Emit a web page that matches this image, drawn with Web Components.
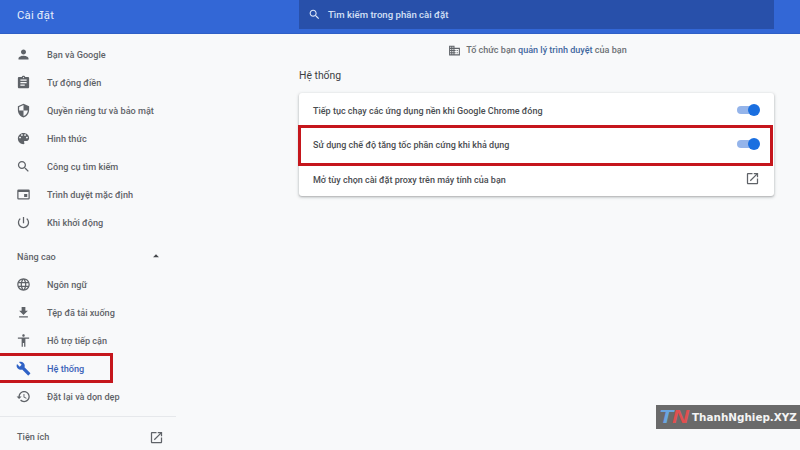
<!DOCTYPE html>
<html lang="vi"><head><meta charset="utf-8"><title>Cài đặt</title>
<style>
html,body{margin:0;height:100%;overflow:hidden;background:#f8f9fa}
body{font-family:Roboto,"Noto Sans",sans-serif;width:800px;height:450px;position:relative}
</style></head><body>
<settings-app></settings-app>
<script>
const P={
person:'M12 12c2.21 0 4-1.79 4-4s-1.79-4-4-4-4 1.79-4 4 1.79 4 4 4zm0 2c-2.67 0-8 1.34-8 4v2h16v-2c0-2.66-5.33-4-8-4z',
assignment:'M19 3h-4.18C14.4 1.84 13.3 1 12 1c-1.3 0-2.4.84-2.82 2H5c-1.1 0-2 .9-2 2v14c0 1.1.9 2 2 2h14c1.1 0 2-.9 2-2V5c0-1.1-.9-2-2-2zm-7 0c.55 0 1 .45 1 1s-.45 1-1 1-1-.45-1-1 .45-1 1-1zm2 14H7v-2h7v2zm3-4H7v-2h10v2zm0-4H7V7h10v2z',
security:'M12 1L3 5v6c0 5.55 3.84 10.74 9 12 5.16-1.26 9-6.45 9-12V5l-9-4zm0 10.99h7c-.53 4.12-3.28 7.79-7 8.94V12H5V6.3l7-3.11v8.8z',
palette:'M12 3c-4.97 0-9 4.03-9 9s4.03 9 9 9c.83 0 1.5-.67 1.5-1.5 0-.39-.15-.74-.39-1.01-.23-.26-.38-.61-.38-.99 0-.83.67-1.5 1.5-1.5H16c2.76 0 5-2.24 5-5 0-4.42-4.03-8-9-8zm-5.5 9c-.83 0-1.5-.67-1.5-1.5S5.67 9 6.5 9 8 9.67 8 10.5 7.33 12 6.5 12zm3-4C8.67 8 8 7.33 8 6.5S8.67 5 9.5 5s1.5.67 1.5 1.5S10.33 8 9.5 8zm5 0c-.83 0-1.5-.67-1.5-1.5S13.67 5 14.5 5s1.5.67 1.5 1.5S15.33 8 14.5 8zm3 4c-.83 0-1.5-.67-1.5-1.5S16.67 9 17.5 9s1.5.67 1.5 1.5-.67 1.5-1.5 1.5z',
search:'M15.5 14h-.79l-.28-.27C15.41 12.59 16 11.11 16 9.5 16 5.91 13.09 3 9.5 3S3 5.91 3 9.5 5.91 16 9.5 16c1.61 0 3.09-.59 4.23-1.57l.27.28v.79l5 4.99L20.49 19l-4.99-5zm-6 0C7.01 14 5 11.99 5 9.5S7.01 5 9.5 5 14 7.01 14 9.5 11.99 14 9.5 14z',
browser:'M20 4H4a2 2 0 0 0-2 2v12a2 2 0 0 0 2 2h16a2 2 0 0 0 2-2V6a2 2 0 0 0-2-2zm0 14H4V8h16zM13 11h5v5h-5z',
power:'M13 3h-2v10h2V3zm4.83 2.17l-1.42 1.42C17.99 7.86 19 9.81 19 12c0 3.87-3.13 7-7 7s-7-3.13-7-7c0-2.19 1.01-4.14 2.58-5.42L6.17 5.17C4.23 6.82 3 9.26 3 12c0 4.97 4.03 9 9 9s9-4.03 9-9c0-2.74-1.23-5.18-3.17-6.83z',
language:'M11.99 2C6.47 2 2 6.48 2 12s4.47 10 9.99 10C17.52 22 22 17.52 22 12S17.52 2 11.99 2zm6.93 6h-2.95c-.32-1.25-.78-2.45-1.38-3.56 1.84.63 3.37 1.91 4.33 3.56zM12 4.04c.83 1.2 1.48 2.53 1.91 3.96h-3.82c.43-1.43 1.08-2.76 1.91-3.96zM4.26 14C4.1 13.36 4 12.69 4 12s.1-1.36.26-2h3.38c-.08.66-.14 1.32-.14 2 0 .68.06 1.34.14 2H4.26zm.82 2h2.95c.32 1.25.78 2.45 1.38 3.56-1.84-.63-3.37-1.9-4.33-3.56zm2.95-8H5.08c.96-1.66 2.49-2.93 4.33-3.56C8.81 5.55 8.35 6.75 8.03 8zM12 19.96c-.83-1.2-1.48-2.53-1.91-3.96h3.82c-.43 1.43-1.08 2.76-1.91 3.96zM14.34 14H9.66c-.09-.66-.16-1.32-.16-2 0-.68.07-1.35.16-2h4.68c.09.65.16 1.32.16 2 0 .68-.07 1.34-.16 2zm.25 5.56c.6-1.11 1.06-2.31 1.38-3.56h2.95c-.96 1.65-2.49 2.93-4.33 3.56zM16.36 14c.08-.66.14-1.32.14-2 0-.68-.06-1.34-.14-2h3.38c.16.64.26 1.31.26 2s-.1 1.36-.26 2h-3.38z',
download:'M19 9h-4V3H9v6H5l7 7 7-7zM5 18v2h14v-2H5z',
access:'M12 2c1.1 0 2 .9 2 2s-.9 2-2 2-2-.9-2-2 .9-2 2-2zm9 7h-6v13h-2v-6h-2v6H9V9H3V7h18v2z',
build:'M22.7 19l-9.1-9.1c.9-2.3.4-5-1.5-6.9-2-2-5-2.4-7.4-1.3L9 6 6 9 1.6 4.7C.4 7.1.9 10.1 2.9 12.1c1.9 1.9 4.6 2.4 6.9 1.5l9.1 9.1c.4.4 1 .4 1.4 0l2.3-2.3c.5-.4.5-1.1.1-1.4z',
restore:'M13 3c-4.97 0-9 4.03-9 9H1l3.89 3.89.07.14L9 12H6c0-3.87 3.13-7 7-7s7 3.13 7 7-3.13 7-7 7c-1.93 0-3.68-.79-4.94-2.06l-1.42 1.42C8.27 19.99 10.51 21 13 21c4.97 0 9-4.03 9-9s-4.03-9-9-9zm-1 5v5l4.28 2.54.72-1.21-3.5-2.08V8H12z',
open:'M19 19H5V5h7V3H5c-1.11 0-2 .9-2 2v14c0 1.1.89 2 2 2h14c1.1 0 2-.9 2-2v-7h-2v7zM14 3v2h3.59l-9.83 9.83 1.41 1.41L19 6.41V10h2V3h-7z',
domain:'M12 7V3H2v18h20V7H12zM6 19H4v-2h2v2zm0-4H4v-2h2v2zm0-4H4V9h2v2zm0-4H4V5h2v2zm4 12H8v-2h2v2zm0-4H8v-2h2v2zm0-4H8V9h2v2zm0-4H8V5h2v2zm10 12h-8v-2h2v-2h-2v-2h2v-2h-2V9h8v10zm-2-8h-2v2h2v-2zm0 4h-2v2h2v-2z',
up:'M7 14l5-5 5 5z'};
function def(name,html,init){customElements.define(name,class extends HTMLElement{
  constructor(){super();this.attachShadow({mode:'open'}).innerHTML=html}
  connectedCallback(){init&&init(this)}
})}
def('m-icon',`<style>:host{display:inline-flex;width:var(--s,16px);height:var(--s,16px);flex:none;color:inherit}svg{width:100%;height:100%;fill:currentColor;display:block}</style><svg viewBox="0 0 24 24"><path></path></svg>`,
 el=>{const n=el.getAttribute('name');if(n)el.shadowRoot.querySelector('path').setAttribute('d',P[n])});

def('app-header',`<style>
:host{display:flex;align-items:flex-start;height:33px;background:#3367d6;border-bottom:1px solid #2f5fc6;box-sizing:content-box;color:#fff}
.t{width:299px;box-sizing:border-box;padding:8px 0 0 17px;font-size:11.3px;font-weight:400;letter-spacing:.2px;line-height:15px;color:#e6edfb}
.s{width:475px;height:29px;background:#2850aa;display:flex;align-items:center;color:#d5e0f6;font-size:9.6px;font-weight:500;gap:7px;padding-left:9px;box-sizing:border-box}
m-icon{--s:13px;color:#dfe8f9}
</style><div class="t">Cài đặt</div><div class="s"><m-icon name="search"></m-icon><span>Tìm kiếm trong phần cài đặt</span></div>`);

def('nav-item',`<style>
:host{display:flex;align-items:center;height:28px;padding-left:16px;position:relative;font-size:9.15px;font-weight:500;color:#5f6368}
:host([active]){color:#3a62b8}
:host([active]) m-icon{color:#2f62c6}
m-icon{--s:15px;margin-right:16px;color:#5f6368}
.x{padding-top:2px}
.h{display:none;position:absolute;left:-4px;top:-1px;width:117px;height:30px;box-sizing:border-box;border:3px solid #c5161c;pointer-events:none}
:host([active]) .h{display:block}
</style><m-icon></m-icon><span class="x"><slot></slot></span><div class="h"></div>`,
 el=>el.shadowRoot.querySelector('m-icon').shadowRoot.querySelector('path').setAttribute('d',P[el.getAttribute('icon')]));

def('app-sidebar',`<style>
:host{display:block;width:176px;flex:none;padding-top:6px;box-sizing:border-box}
.a{display:flex;align-items:center;height:28px;margin-top:6px;padding:0 13px 0 17px;font-size:9.15px;font-weight:500;color:#5f6368;justify-content:space-between}
.a span{padding-top:2px}
.a m-icon{--s:14px;color:#44474b}
hr{border:0;border-top:1px solid #e6e8eb;margin:6px 0}
.e{display:flex;align-items:center;justify-content:space-between;height:28px;padding:0 12px 0 17px;font-size:9.15px;font-weight:500;color:#5f6368}
.e m-icon{--s:15px;color:#5f6368}
</style>
<nav-item icon="person">Bạn và Google</nav-item>
<nav-item icon="assignment">Tự động điền</nav-item>
<nav-item icon="security">Quyền riêng tư và bảo mật</nav-item>
<nav-item icon="palette">Hình thức</nav-item>
<nav-item icon="search">Công cụ tìm kiếm</nav-item>
<nav-item icon="browser">Trình duyệt mặc định</nav-item>
<nav-item icon="power">Khi khởi động</nav-item>
<div class="a"><span>Nâng cao</span><m-icon name="up"></m-icon></div>
<nav-item icon="language">Ngôn ngữ</nav-item>
<nav-item icon="download">Tệp đã tải xuống</nav-item>
<nav-item icon="access">Hỗ trợ tiếp cận</nav-item>
<nav-item icon="build" active>Hệ thống</nav-item>
<nav-item icon="restore">Đặt lại và dọn dẹp</nav-item>
<hr><div class="e"><span>Tiện ích</span><m-icon name="open"></m-icon></div>`);

def('toggle-switch',`<style>
:host{display:block;position:relative;width:23px;height:12px}
.t{position:absolute;left:0;top:2px;width:20px;height:8px;border-radius:4px;background:#94b4ea}
.k{position:absolute;right:0;top:0;width:12px;height:12px;border-radius:50%;background:#1a6fe0}
</style><div class="t"></div><div class="k"></div>`);

def('setting-row',`<style>
:host{display:flex;align-items:center;justify-content:space-between;height:34.33px;padding:0 14px;position:relative;font-size:9px;font-weight:500;color:#4a4d51}
.x{padding-top:2px}
:host([highlight])::after{content:"";position:absolute;left:-1px;right:1px;top:-2px;bottom:-4px;border:3px solid #c5161c;box-sizing:border-box;pointer-events:none}
</style><span class="x"><slot></slot></span><slot name="end"></slot>`);

def('setting-card',`<style>:host{display:block;background:#fff;border-radius:3px;box-shadow:0 1px 2px rgba(60,64,67,.3),0 1px 3px 1px rgba(60,64,67,.12)}</style><slot></slot>`);

def('app-main',`<style>
:host{display:block;flex:1;padding:0 26px 0 123px;box-sizing:border-box;min-width:0}
.m{display:flex;align-items:center;justify-content:center;height:30px;padding-left:2px;font-size:9.05px;font-weight:500;color:#6d7175;gap:5px;margin-top:1px}
.m m-icon{--s:13px;color:#5f6368}.m b{font-weight:500;color:#41689f}
h2{margin:3px 0 0;height:25px;font-size:10.4px;font-weight:400;color:#3c4043;line-height:16px}
setting-card m-icon{--s:15px;color:#5f6368}
</style>
<div class="m"><m-icon name="domain"></m-icon><span>Tổ chức bạn <b>quản lý trình duyệt</b> của bạn</span></div>
<h2>Hệ thống</h2>
<setting-card>
<setting-row>Tiếp tục chạy các ứng dụng nền khi Google Chrome đóng<toggle-switch slot="end"></toggle-switch></setting-row>
<setting-row highlight>Sử dụng chế độ tăng tốc phần cứng khi khả dụng<toggle-switch slot="end"></toggle-switch></setting-row>
<setting-row>Mở tùy chọn cài đặt proxy trên máy tính của bạn<m-icon name="open" slot="end"></m-icon></setting-row>
</setting-card>`);

def('water-mark',`<style>
:host{position:absolute;right:0;top:405px;width:144px;height:24px;background:#6a6a6a;display:flex;align-items:center;padding-left:3px;box-sizing:border-box;color:#f4f4f4;font:700 10.4px "DejaVu Sans",sans-serif;white-space:nowrap}
.w{width:33px;flex:none}
.l{display:inline-block;font:italic 900 18px/1 "Liberation Sans",sans-serif;transform:scaleX(1.3);transform-origin:left center;letter-spacing:-1px}
.a{color:#6aa5e0}.b{color:#e05050}
</style><span class="w"><span class="l"><span class="a">T</span><span class="b">N</span></span></span><span>ThanhNghiep.XYZ</span>`);

def('settings-app',`<style>
:host{display:block;height:450px;overflow:hidden;background:#f8f9fa}
.b{display:flex}
</style><app-header></app-header><div class="b"><app-sidebar></app-sidebar><app-main></app-main></div><water-mark></water-mark>`);
</script></body></html>
